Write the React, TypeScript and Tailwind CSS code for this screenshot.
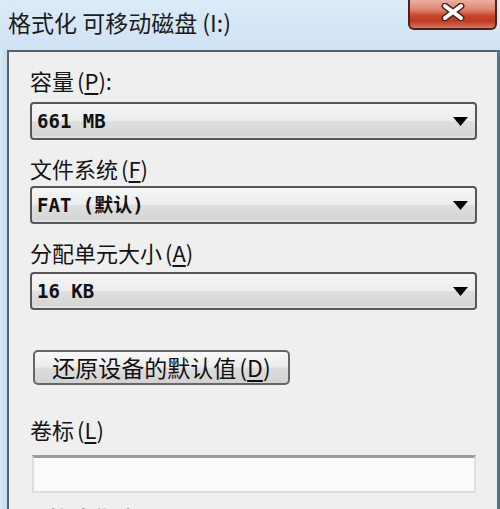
import React from "react";

function Acc({ k }: { k: string }) {
  return (
    <span className="ml-[3px]">
      (<span className="underline underline-offset-[3px]">{k}</span>)
    </span>
  );
}

function Label(props: any) {
  return (
    <div
      className={`h-[30px] whitespace-nowrap font-['Noto_Sans_CJK_SC',sans-serif] text-[22px] leading-[30px] text-[#141414] ${props.className || ""}`}
    >
      {props.text}
      <Acc k={props.acc} />
      {props.colon ? ":" : ""}
    </div>
  );
}

function Combo(props: any) {
  return (
    <div
      className={`flex h-[38px] items-center justify-between rounded-[4px] border-2 border-[#575757] bg-[linear-gradient(to_bottom,#f5f5f5_0%,#ededed_48%,#dedede_52%,#d6d6d6_92%,#e6e6e6_100%)] pl-[5px] pr-[7px] ${props.className || ""}`}
    >
      <span className="whitespace-pre font-['DejaVu_Sans_Mono','Noto_Sans_CJK_SC',monospace] text-[19px] font-bold text-[#111]">
        {props.value}
      </span>
      <svg width="15" height="9" viewBox="0 0 15 9">
        <polygon points="0,0 15,0 7.5,9" fill="#000" />
      </svg>
    </div>
  );
}

export default function App() {
  return (
    <div className="h-[509px] w-[500px] overflow-hidden bg-[#cde1f3]">
      {/* title bar */}
      <div className="flex h-[50px] items-start justify-between bg-[linear-gradient(to_bottom,#dcebf8,#cfe2f4)]">
        <div className="whitespace-pre pl-[8px] font-['Noto_Sans_CJK_SC',sans-serif] text-[23px] leading-[44px] text-[#1b1b1b]">
          格式化 可移动磁盘 (I:)
        </div>
        <div className="mr-[3px] flex h-[30px] w-[89px] items-center justify-center rounded-b-[6px] border-2 border-t-0 border-[#4d2119] bg-[linear-gradient(to_bottom,#eab0a3_0%,#dc8570_35%,#c9472f_55%,#bf3a22_75%,#d8775c_100%)]">
          <svg width="24" height="18" viewBox="0 0 24 18" className="mt-[-4px]">
            <path d="M4 3 L20 15 M20 3 L4 15" stroke="#5a2418" strokeWidth="7" strokeLinecap="round" />
            <path d="M4 3 L20 15 M20 3 L4 15" stroke="#ffffff" strokeWidth="4" strokeLinecap="round" />
          </svg>
        </div>
      </div>

      {/* body */}
      <div className="flex h-[459px]">
        <div className="w-[7px] bg-[linear-gradient(to_right,#d8e8f6,#c4dbef)]" />
        <div className="flex-1 border-l-2 border-t-2 border-[#56626d] bg-[#efefef] pl-[21px] pr-[20px] pt-[13px]">
          <Label text="容量" acc="P" colon />
          <Combo value="661 MB" className="mt-[7px]" />

          <Label text="文件系统" acc="F" className="mt-[13px]" />
          <Combo value="FAT (默认)" className="mt-[3px]" />

          <Label text="分配单元大小" acc="A" className="mt-[13px]" />
          <Combo value="16 KB" className="mt-[5px]" />

          <div className="ml-[3px] mt-[40px] flex h-[35px] w-[257px] items-center justify-center rounded-[5px] border-2 border-[#666] bg-[linear-gradient(to_bottom,#f8f8f8_0%,#ececec_48%,#dddddd_52%,#d2d2d2_100%)] font-['Noto_Sans_CJK_SC',sans-serif] text-[23px] leading-none text-[#111]">
            还原设备的默认值
            <Acc k="D" />
          </div>

          <Label text="卷标" acc="L" className="mt-[29px]" />
          <div className="ml-[2px] mt-[11px] h-[38px] w-[444px] border-2 border-t-[3px] border-[#dedede] border-t-[#9c9c9c] bg-[#fbfbfb]" />

          <Label text="格式化选项" acc="O" className="mt-[9px] pl-[18px] text-[#9a9a9a]" />
        </div>
        <div className="w-[3px] bg-[#587283]" />
      </div>
    </div>
  );
}
